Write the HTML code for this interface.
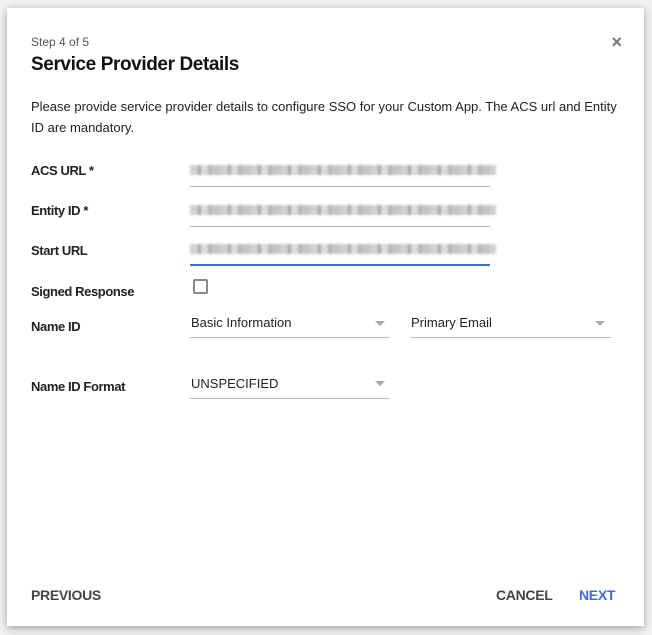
<!DOCTYPE html><html><head><style>
body{margin:0;width:652px;height:635px;background:#f1f1f1;font-family:"Liberation Sans",sans-serif;position:relative;overflow:hidden}
.d{position:absolute;left:7px;top:8px;width:637px;height:618px;background:#fff;box-shadow:0 2px 8px rgba(0,0,0,.35)}
.a{position:absolute;white-space:nowrap}
.l{font-size:13px;font-weight:bold;color:#222;left:24px;letter-spacing:-0.4px}
.blur{position:absolute;left:183px;width:306px;height:10px;background:repeating-linear-gradient(90deg,#c8c8c8 0 8px,#999 8px 11px,#d6d6d6 11px 18px,#aaa 18px 22px,#bbb 22px 30px);filter:blur(1px);opacity:.85}
.ln{position:absolute;left:183px;width:300px;height:1px;background:#bbb}
.sel{position:absolute;font-size:13px;color:#222}
.tri{position:absolute;width:0;height:0;border-left:5px solid transparent;border-right:5px solid transparent;border-top:5px solid #aaa}
.btn{position:absolute;font-size:14px;font-weight:bold;top:579px;letter-spacing:-0.3px}
</style></head><body>
<div class="d">
<div class="a" style="left:24px;top:27px;font-size:12px;color:#555">Step 4 of 5</div>
<div class="a" style="left:24px;top:46px;font-size:19px;font-weight:bold;color:#111;letter-spacing:-0.4px">Service Provider Details</div>
<div class="a" style="right:22px;top:24px;font-size:18px;color:#777;font-weight:bold">×</div>
<div class="a" style="left:24px;top:88px;font-size:13px;color:#222;line-height:21px">Please provide service provider details to configure SSO for your Custom App. The ACS url and Entity<br>ID are mandatory.</div>
<div class="a l" style="top:155px">ACS URL *</div>
<div class="blur" style="top:157px"></div><div class="ln" style="top:178px"></div>
<div class="a l" style="top:195px">Entity ID *</div>
<div class="blur" style="top:197px"></div><div class="ln" style="top:218px"></div>
<div class="a l" style="top:235px">Start URL</div>
<div class="blur" style="top:236px"></div><div class="ln" style="top:256px;height:2px;background:#3b6fd0"></div>
<div class="a l" style="top:276px">Signed Response</div>
<div style="position:absolute;left:186px;top:271px;width:11px;height:11px;border:2px solid #888;border-radius:2px"></div>
<div class="a l" style="top:311px">Name ID</div>
<div class="sel" style="left:184px;top:307px">Basic Information</div><div class="tri" style="left:368px;top:313px"></div><div class="ln" style="top:329px;width:200px"></div>
<div class="sel" style="left:404px;top:307px">Primary Email</div><div class="tri" style="left:588px;top:313px"></div><div class="ln" style="left:404px;top:329px;width:200px"></div>
<div class="a l" style="top:371px">Name ID Format</div>
<div class="sel" style="left:184px;top:368px">UNSPECIFIED</div><div class="tri" style="left:368px;top:373px"></div><div class="ln" style="top:390px;width:200px"></div>
<div class="btn" style="left:24px;color:#444">PREVIOUS</div>
<div class="btn" style="left:489px;color:#444">CANCEL</div>
<div class="btn" style="left:572px;color:#3b6fd0">NEXT</div>
</div>
</body></html>
